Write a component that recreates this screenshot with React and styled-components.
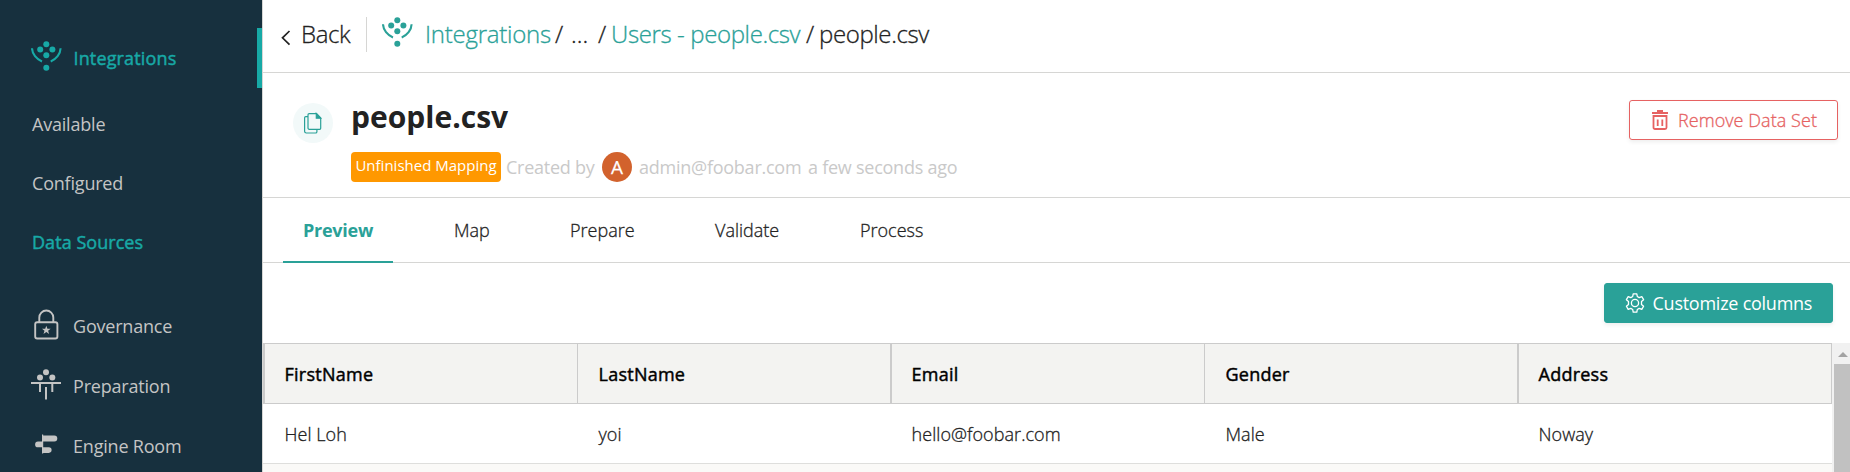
import React from "react";
import styled, { createGlobalStyle, css } from "styled-components";

const teal = "#2aa198";
const bright = "#17a9a6";
const line = "#d6d6d4";

const GlobalStyle = createGlobalStyle`
  * { box-sizing: border-box; }
  body { margin: 0; overflow: hidden; background: #fff; font-family: "Open Sans", sans-serif; }
`;

/* In-between weights that Open Sans does not ship: a hairline stroke thickens the glyphs. */
const medium = css`
  font-weight: 400;
  -webkit-text-stroke: 0.45px currentColor;
`;
const book = css`
  font-weight: 300;
  -webkit-text-stroke: 0.3px currentColor;
`;

const Shell = styled.div`
  display: flex;
  width: 1850px;
  height: 472px;
  overflow: hidden;
  font-size: 18px;
  color: #222;
  white-space: nowrap;
`;

const Sidebar = styled.nav`
  flex: none;
  width: 263px;
  height: 100%;
  padding-top: 28px;
  background: #17303e;
  border-right: 1px solid ${line};
`;

const NavItem = styled.a`
  display: flex;
  align-items: center;
  height: 60px;
  padding: 0 0 2px 30px;
  color: #c4c4c4;
  letter-spacing: -0.2px;
  svg { flex: none; margin: 0 11px 3px 0; }
  ${(p) => p.$active && css`
    ${medium}
    padding: 0 0 0 31px;
    color: ${bright};
    letter-spacing: 0.15px;
    border-right: 5px solid ${bright};
    svg { margin: 0 11.5px 4px 0; }
  `}
`;

const SubList = styled.div`
  margin: 6px 0 26px;
`;

const SubItem = styled.a`
  display: flex;
  align-items: center;
  height: 59px;
  padding-left: 32px;
  color: #c4c4c4;
  letter-spacing: -0.2px;
  ${(p) => p.$active && css`
    ${medium}
    color: ${bright};
    letter-spacing: 0.05px;
  `}
`;

const Main = styled.main`
  flex: 1;
  min-width: 0;
  display: flex;
  flex-direction: column;
`;

const TopBar = styled.header`
  flex: none;
  display: flex;
  height: 73px;
  padding: 17px 0 0 17px;
  border-bottom: 1px solid ${line};
  font-size: 24px;
  ${book}
  line-height: 34px;
  letter-spacing: -0.38px;
`;

const Back = styled.a`
  display: flex;
  width: 86px;
  svg { margin: 13px 10px 0 1px; }
`;

const Crumbs = styled.div`
  display: flex;
  height: 35px;
  padding-left: 15px;
  border-left: 1px solid ${line};
  svg { margin-right: 12px; }
`;

const Crumb = styled.span`
  width: ${(p) => p.$w}px;
  color: ${(p) => (p.$link ? teal : "#222")};
  letter-spacing: ${(p) => p.$track ?? -0.38}px;
`;

const Header = styled.section`
  flex: none;
  display: flex;
  height: 125px;
  padding: 27px 12px 0 30px;
  border-bottom: 1px solid ${line};
`;

const FileBadge = styled.div`
  display: flex;
  align-items: center;
  justify-content: center;
  width: 40px;
  height: 40px;
  margin: 3px 18px 0 0;
  border-radius: 50%;
  background: #f2f9f9;
`;

const Details = styled.div`
  flex: 1;
`;

const Title = styled.h1`
  margin: 0;
  height: 52px;
  font-size: 30px;
  font-weight: 700;
  line-height: 34px;
`;

const Meta = styled.div`
  display: flex;
  align-items: center;
  height: 30px;
  color: #c9c9c9;
`;

const Status = styled.span`
  width: 150px;
  height: 30px;
  margin-right: 5px;
  border-radius: 4px;
  background: #ff9800;
  color: #fff;
  font-size: 15px;
  line-height: 27px;
  text-align: center;
`;

const Avatar = styled.span`
  width: 30px;
  height: 30px;
  margin: 0 7px 0 8px;
  border-radius: 50%;
  background: #d2622d;
  color: #fff;
  font-size: 19px;
  font-weight: 400;
  -webkit-text-stroke: 0.25px currentColor;
  line-height: 30px;
  text-align: center;
`;

const MetaText = styled.span`
  width: ${(p) => p.$w}px;
  letter-spacing: -0.25px;
`;

const Button = styled.button`
  display: flex;
  align-items: center;
  height: 40px;
  padding: 0 0 0 ${(p) => (p.$solid ? 20 : 22)}px;
  width: ${(p) => (p.$solid ? 229 : 209)}px;
  border: 1px solid ${(p) => (p.$solid ? teal : "#e66262")};
  border-radius: 3px;
  background: ${(p) => (p.$solid ? teal : "#fff")};
  color: ${(p) => (p.$solid ? "#fff" : "#e66262")};
  box-shadow: 0 2px 4px rgba(0, 0, 0, 0.07);
  font-family: "Open Sans", sans-serif;
  font-size: 18px;
  ${(p) => (p.$solid ? css`font-weight: 400; letter-spacing: -0.25px;` : css`${book} letter-spacing: 0.06px;`)}
  svg { flex: none; margin-right: ${(p) => (p.$solid ? 7.5 : 10)}px; }
`;

const Tabs = styled.div`
  flex: none;
  display: flex;
  height: 65px;
  padding-left: 20px;
  border-bottom: 1px solid ${line};
`;

const Tab = styled.a`
  width: ${(p) => p.$w}px;
  height: 65px;
  padding-left: 21px;
  line-height: 65px;
  ${book}
  ${(p) => p.$active && css`
    -webkit-text-stroke: 0;
    padding-left: 20px;
    font-weight: 700;
    letter-spacing: -0.25px;
    color: ${teal};
    border-bottom: 2px solid ${teal};
    margin-right: 40px;
  `}
`;

const Toolbar = styled.div`
  flex: none;
  display: flex;
  justify-content: flex-end;
  height: 80px;
  padding: 20px 17px 0 0;
`;

const TableArea = styled.div`
  flex: 1;
  display: flex;
`;

const Grid = styled.div`
  width: 1569px;
`;

const Row = styled.div`
  display: grid;
  grid-template-columns: 314px 313px 314px 313px 315px;
  height: 60px;
  line-height: 61px;
  color: #222;
  background: ${(p) => (p.$alt ? "#faf9f7" : "#fff")};
  border-bottom: 1px solid #dededc;
  letter-spacing: 0.06px;
  ${book}
  ${(p) => p.$head && css`
    ${medium}
    height: 61px;
    color: #000;
    background: #f3f3f1;
    border: 1px solid #cbcbcb;
    border-left: 0;
    letter-spacing: 0.25px;
  `}
`;

const Cell = styled.div`
  height: 59px;
  border-left: ${(p) => p.$edge || 0}px solid #cbcbcb;
  padding-left: ${(p) => 21.5 - (p.$edge || 0)}px;
`;

const Scrollbar = styled.div`
  width: 18px;
  padding: 9px 0 0 2px;
  background: #f1f1f1;
  svg { display: block; margin-left: 4px; }
`;

const Thumb = styled.div`
  height: 110px;
  margin-top: 7px;
  background: #c1c1c1;
`;

const HubIcon = ({ color }) => (
  <svg width="31" height="31" viewBox="0 0 31 31" fill={color}>
    <circle cx="15.3" cy="3.3" r="3" />
    <circle cx="9.2" cy="8.6" r="3" />
    <circle cx="21.4" cy="8.6" r="3" />
    <circle cx="15.3" cy="14.2" r="3" />
    <circle cx="15.3" cy="26.8" r="3" />
    <path d="M1 7.2C1.2 13 5.500 18.300 11 20.400M29.600 7.200C29.400 13 25.200 18.300 19.700 20.400" fill="none" stroke={color} strokeWidth="2.1" />
  </svg>
);

const LockIcon = () => (
  <svg width="32" height="31" viewBox="-1 0 32 31" fill="none" stroke="#c4c4c4" strokeWidth="1.9">
    <rect x="4.200" y="13.200" width="22.200" height="16.300" rx="2" />
    <path d="M8.300 13V8.500a7 7 0 0 1 14 0V13" />
    <path d="M15.300 16.800l1.100 3h3.200l-2.500 2 1 3.100-2.800-1.900-2.800 1.900 1-3.100-2.500-2h3.200z" fill="#c4c4c4" stroke="none" />
  </svg>
);

const PrepIcon = () => (
  <svg width="32" height="31" viewBox="-1 0 32 31" fill="#c4c4c4">
    <circle cx="15" cy="3.300" r="3" />
    <circle cx="9" cy="8.600" r="3" />
    <circle cx="21.300" cy="8.600" r="3" />
    <path d="M0 13h30v2H0zM8 15h2v8H8zM20.300 15h2v8h-2zM14 18h2v12.500h-2z" />
  </svg>
);

const SignIcon = () => (
  <svg width="32" height="31" viewBox="-1 0 32 31" fill="#c4c4c4">
    <path d="M11 6.500h12.300a3 3 0 0 1 0 6H11zM12 12.500H7a2.900 2.900 0 0 0 0 5.800h5zM11 18.300h6.800a2.800 2.800 0 0 1 0 5.600H11z" />
    <path d="M11 5.500h1.200v19H11z" />
  </svg>
);

const ChevronIcon = () => (
  <svg width="10" height="16" viewBox="0 0 10 16" fill="none" stroke="#222" strokeWidth="1.7">
    <path d="M8.500 1L1.500 7.800l7 6.800" />
  </svg>
);

const CopyIcon = () => (
  <svg width="20" height="22" viewBox="0 0 20 22" fill="none" stroke={teal} strokeWidth="1.2">
    <path d="M6.200 1.600h7.300l4.200 4.300v10.400a1 1 0 0 1-1 1H6.200a1.200 1.200 0 0 1-1.200-1.200V2.800a1.200 1.200 0 0 1 1.200-1.200z" />
    <path d="M13.300 1.600v4.600H17.700z" fill={teal} />
    <path d="M5 4.600H2.800a1.200 1.200 0 0 0-1.200 1.200v13.600A1.700 1.700 0 0 0 3.300 21h9.300a1.300 1.300 0 0 0 1.300-1.300v-2.200" />
  </svg>
);

const TrashIcon = () => (
  <svg width="16" height="20" viewBox="0 0 16 20" fill="none" stroke="#e66262">
    <path d="M0 3h16" strokeWidth="2" />
    <path d="M5 1h6" strokeWidth="2" />
    <path d="M1.500 6h13v11.500a1.500 1.500 0 0 1-1.500 1.500H3a1.500 1.500 0 0 1-1.500-1.500z" strokeWidth="1.800" />
    <path d="M5.700 9.500v6.500M10.300 9.500v6.500" strokeWidth="1.800" />
  </svg>
);

const GearIcon = () => (
  <svg width="20" height="20" viewBox="0 0 20 20" fill="none" stroke="#fff" strokeWidth="1.300" strokeLinejoin="round">
    <path d="M8.200 .8h3.600l.5 2.700 1.900 1.100 2.600-1 1.800 3.100-2.100 1.800v2.900l2.100 1.800-1.800 3.200-2.600-1-1.900 1.100-.5 2.700H8.200l-.5-2.700-1.900-1.100-2.600 1-1.800-3.200 2.100-1.800V8.500L1.400 6.700l1.800-3.100 2.600 1 1.900-1.100z" />
    <circle cx="10" cy="10" r="3.600" />
  </svg>
);

export default function App() {
  return (
    <>
      <GlobalStyle />
      <Shell>
        <Sidebar>
          <NavItem $active><HubIcon color={bright} /><span>Integrations</span></NavItem>
          <SubList>
            <SubItem>Available</SubItem>
            <SubItem>Configured</SubItem>
            <SubItem $active>Data Sources</SubItem>
          </SubList>
          <NavItem><LockIcon /><span>Governance</span></NavItem>
          <NavItem><PrepIcon /><span>Preparation</span></NavItem>
          <NavItem><SignIcon /><span>Engine Room</span></NavItem>
        </Sidebar>
        <Main>
          <TopBar>
            <Back><ChevronIcon /><span>Back</span></Back>
            <Crumbs>
              <HubIcon color={teal} />
              <Crumb $link $w={130} $track={-0.25}>Integrations</Crumb>
              <Crumb $w={16}>/</Crumb>
              <Crumb $w={27} $track={0}>...</Crumb>
              <Crumb $w={13}>/</Crumb>
              <Crumb $link $w={195}>Users - people.csv</Crumb>
              <Crumb $w={13}>/</Crumb>
              <Crumb $w={120}>people.csv</Crumb>
            </Crumbs>
          </TopBar>
          <Header>
            <FileBadge><CopyIcon /></FileBadge>
            <Details>
              <Title>people.csv</Title>
              <Meta>
                <Status>Unfinished Mapping</Status>
                <MetaText $w={88}>Created by</MetaText>
                <Avatar>A</Avatar>
                <MetaText $w={169}>admin@foobar.com</MetaText>
                <MetaText $w={160}>a few seconds ago</MetaText>
              </Meta>
            </Details>
            <Button><TrashIcon /><span>Remove Data Set</span></Button>
          </Header>
          <Tabs>
            <Tab $active $w={110}>Preview</Tab>
            <Tab $w={116}>Map</Tab>
            <Tab $w={145}>Prepare</Tab>
            <Tab $w={145}>Validate</Tab>
            <Tab $w={110}>Process</Tab>
          </Tabs>
          <Toolbar>
            <Button $solid><GearIcon /><span>Customize columns</span></Button>
          </Toolbar>
          <TableArea>
            <Grid>
              <Row $head>
                <Cell $edge={2}>FirstName</Cell>
                <Cell $edge={1}>LastName</Cell>
                <Cell $edge={2}>Email</Cell>
                <Cell $edge={1}>Gender</Cell>
                <Cell $edge={2}>Address</Cell>
              </Row>
              <Row>
                <Cell>Hel Loh</Cell>
                <Cell>yoi</Cell>
                <Cell>hello@foobar.com</Cell>
                <Cell>Male</Cell>
                <Cell>Noway</Cell>
              </Row>
              <Row $alt />
            </Grid>
            <Scrollbar>
              <svg width="10" height="5" viewBox="0 0 10 5"><path d="M0 5L5 0l5 5z" fill="#a3a3a3" /></svg>
              <Thumb />
            </Scrollbar>
          </TableArea>
        </Main>
      </Shell>
    </>
  );
}
